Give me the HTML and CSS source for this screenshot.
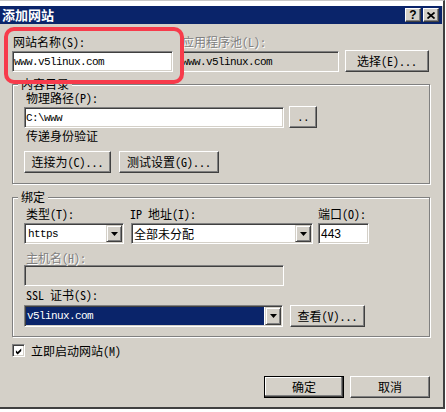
FILE: index.html
```html
<!DOCTYPE html>
<html lang="zh-CN">
<head>
<meta charset="utf-8">
<title>添加网站</title>
<link rel="stylesheet" href="styles.css">
</head>
<body>
<div class="win">
  <div class="strip"></div>
  <div class="titlebar">
    <span class="title">添加网站</span>
    <div class="caps">
      <span class="cap help">?</span>
      <span class="cap close"><svg width="8" height="7" viewBox="0 0 8 7"><path d="M0.5 0.5L7.5 6.5M7.5 0.5L0.5 6.5" stroke="#000" stroke-width="1.7" fill="none"/></svg></span>
    </div>
  </div>

  <div class="client">
    <div class="row1">
      <div class="f-site">
        <div class="lbl">网站名称(S):</div>
        <div class="edit sunken"><span class="mono">www.v5linux.com</span></div>
      </div>
      <div class="f-pool">
        <div class="lbl dis">应用程序池(L):</div>
        <div class="edit sunken ro"><span class="mono">www.v5linux.com</span></div>
      </div>
      <div class="btn w-select">选择(E)...</div>
    </div>

    <div class="group g1">
      <span class="legend">内容目录</span>
      <div class="lbl in">物理路径(P):</div>
      <div class="hrow gap5 mt1">
        <div class="edit sunken w260"><span class="mono">C:\www</span></div>
        <div class="btn w-dots"><span class="mono dots">..</span></div>
      </div>
      <div class="lbl in mt1">传递身份验证</div>
      <div class="hrow gap8 mt8">
        <div class="btn w-conn">连接为(C)...</div>
        <div class="btn w-test">测试设置(G)...</div>
      </div>
    </div>

    <div class="group g2">
      <span class="legend">绑定</span>
      <div class="hrow">
        <div class="col-type">
          <div class="lbl in">类型(T):</div>
          <div class="combo sunken">
            <div class="combo-text"><span class="mono pl2">https</span></div>
            <div class="drop"><svg width="7" height="4" viewBox="0 0 7 4"><path d="M0 0H7L3.5 4Z" fill="#000"/></svg></div>
          </div>
        </div>
        <div class="col-ip">
          <div class="lbl">IP 地址(I):</div>
          <div class="combo sunken">
            <div class="combo-text pl1">全部未分配</div>
            <div class="drop"><svg width="7" height="4" viewBox="0 0 7 4"><path d="M0 0H7L3.5 4Z" fill="#000"/></svg></div>
          </div>
        </div>
        <div class="col-port">
          <div class="lbl">端口(O):</div>
          <div class="edit sunken"><span class="sans pl1">443</span></div>
        </div>
      </div>
      <div class="lbl in dis mt7">主机名(H):</div>
      <div class="edit sunken ro w260"></div>
      <div class="lbl in mt2">SSL 证书(S):</div>
      <div class="hrow gap7 mt3">
        <div class="combo sunken tall w-ssl">
          <div class="combo-text sel"><span class="mono">v5linux.com</span></div>
          <div class="drop"><svg width="7" height="4" viewBox="0 0 7 4"><path d="M0 0H7L3.5 4Z" fill="#000"/></svg></div>
        </div>
        <div class="btn w-view">查看(V)...</div>
      </div>
    </div>

    <div class="chkrow">
      <span class="chk sunken"><svg width="9" height="9" viewBox="0 0 9 9"><path d="M1 3L3 5L7 1V4L3 8L1 6Z" fill="#000"/></svg></span>
      <span class="chk-lbl">立即启动网站(M)</span>
    </div>

    <div class="actions">
      <div class="btn def">确定</div>
      <div class="btn">取消</div>
    </div>
  </div>

  <div class="mark"></div>
</div>
</body>
</html>
```
FILE: styles.css
```css
* { box-sizing: border-box; }
html, body { margin: 0; padding: 0; }
body {
  width: 446px;
  height: 412px;
  overflow: hidden;
  background: #fff;
  color: #000;
  font-family: "Noto Sans Mono CJK SC", "Noto Sans CJK SC", sans-serif;
  font-size: 12px;
  line-height: 14px;
}
.win {
  position: relative;
  width: 445px;
  height: 409px;
  background: #d4d0c8;
  border-top: 1px solid #c8c8c8;
  border-right: 2px solid #404040;
  border-bottom: 2px solid #404040;
}
.strip { height: 5px; background: #fff; }
.titlebar {
  height: 18px;
  margin-right: 1px;
  background: #0a246a;
  display: flex;
  align-items: center;
  justify-content: space-between;
  padding: 0 3px 0 2px;
}
.title { color: #fff; font-weight: bold; font-size: 13px; line-height: 18px; }
.caps { display: flex; gap: 2px; }
.cap {
  width: 16px;
  height: 14px;
  background: #d4d0c8;
  border: 1px solid;
  border-color: #fff #404040 #404040 #fff;
  box-shadow: inset -1px -1px #808080;
  display: flex;
  align-items: center;
  justify-content: center;
}
.help { font-family: "Liberation Sans", sans-serif; font-weight: bold; font-size: 12px; line-height: 12px; color: #000; }

.client { padding-top: 11px; }

.sunken {
  border: 1px solid;
  border-color: #808080 #fff #fff #808080;
  box-shadow: inset 1px 1px #404040, inset -1px -1px #d4d0c8;
  padding: 1px;
  background: #fff;
}
.ro { background: #d4d0c8; }
.edit { height: 21px; display: flex; align-items: center; overflow: hidden; white-space: nowrap; }
.mono {
  font-family: "Liberation Mono", monospace;
  font-size: 11px;
  letter-spacing: -0.6px;
  line-height: 14px;
}
.sans { font-family: "Liberation Sans", sans-serif; font-size: 12px; }
.pl1 { padding-left: 1px; }
.pl2 { padding-left: 2px; }

.lbl { height: 14px; line-height: 14px; white-space: nowrap; padding-left: 1px; margin-bottom: 2px; }
.lbl.in { padding-left: 2px; }
.dis { color: #808080; text-shadow: 1px 1px #fff; }

.btn {
  height: 22px;
  width: 80px;
  background: #d4d0c8;
  border: 1px solid;
  border-color: #fff #404040 #404040 #fff;
  box-shadow: inset -1px -1px #808080;
  display: flex;
  align-items: center;
  justify-content: center;
  white-space: nowrap;
}
.btn.def {
  border-color: #000;
  box-shadow: inset -1px -1px #404040, inset -2px -2px #808080, inset 1px 1px #fff;
}

.row1 { display: flex; align-items: flex-end; padding-left: 12px; }
.f-site { width: 161px; }
.f-pool { width: 159px; margin-left: 7px; }
.f-pool .lbl { padding-left: 2px; }
.w-select { width: 84px; margin-left: 6px; }

.group {
  position: relative;
  margin-left: 12px;
  width: 418px;
  border: 1px solid #808080;
  box-shadow: inset 1px 1px #fff, 1px 1px #fff;
  padding-left: 11px;
}
.g1 { margin-top: 12px; padding-top: 6px; padding-bottom: 10px; }
.g2 { margin-top: 13px; padding-top: 9px; padding-bottom: 9px; }
.legend {
  position: absolute;
  top: -7px;
  left: 5px;
  padding: 0 3px;
  line-height: 12px;
  background: #d4d0c8;
}
.g1 .lbl, .g2 .lbl { margin-bottom: 0; }
.hrow { display: flex; align-items: flex-end; }
.gap5 { gap: 5px; }
.gap7 { gap: 7px; }
.gap8 { gap: 8px; }
.mt1 { margin-top: 1px; }
.mt2 { margin-top: 2px; }
.mt3 { margin-top: 3px; }
.mt7 { margin-top: 7px; }
.mt8 { margin-top: 8px; }
.w260 { width: 260px; }
.w-dots { width: 28px; }
.dots { padding-top: 2px; }
.w-conn { width: 87px; }
.w-test { width: 100px; }
.w-view { width: 75px; }

.col-type { width: 100px; }
.col-ip { width: 182px; margin-left: 7px; }
.col-port { width: 51px; margin-left: 5px; }
.col-type .lbl, .col-ip .lbl, .col-port .lbl { margin-bottom: 2px; }
.col-ip .lbl { padding-left: 0; margin-left: -1px; }
.col-port .lbl { padding-left: 0; }

.combo { height: 21px; display: flex; }
.combo.tall { height: 22px; }
.w-ssl { width: 259px; }
.combo-text { flex: 1; display: flex; align-items: center; overflow: hidden; white-space: nowrap; }
.combo-text.sel { background: #0a246a; color: #fff; margin: 0 1px 0 0; padding-left: 1px; }
.drop {
  width: 16px;
  background: #d4d0c8;
  border: 1px solid;
  border-color: #d4d0c8 #404040 #404040 #d4d0c8;
  box-shadow: inset 1px 1px #fff, inset -1px -1px #808080;
  display: flex;
  align-items: center;
  justify-content: center;
}

.chkrow { display: flex; align-items: center; height: 13px; margin: 7px 0 0 12px; }
.chk { width: 13px; height: 13px; display: flex; padding: 1px; }
.chk svg { display: block; margin: 1px 0 0 1px; }
.chk-lbl { margin-left: 6px; line-height: 13px; }

.actions { display: flex; justify-content: flex-end; gap: 6px; padding-right: 13px; margin-top: 19px; }

.mark {
  position: absolute;
  left: 4px;
  top: 26px;
  width: 180px;
  height: 57px;
  border: 4px solid #f73b4b;
  border-radius: 10px;
}
```
